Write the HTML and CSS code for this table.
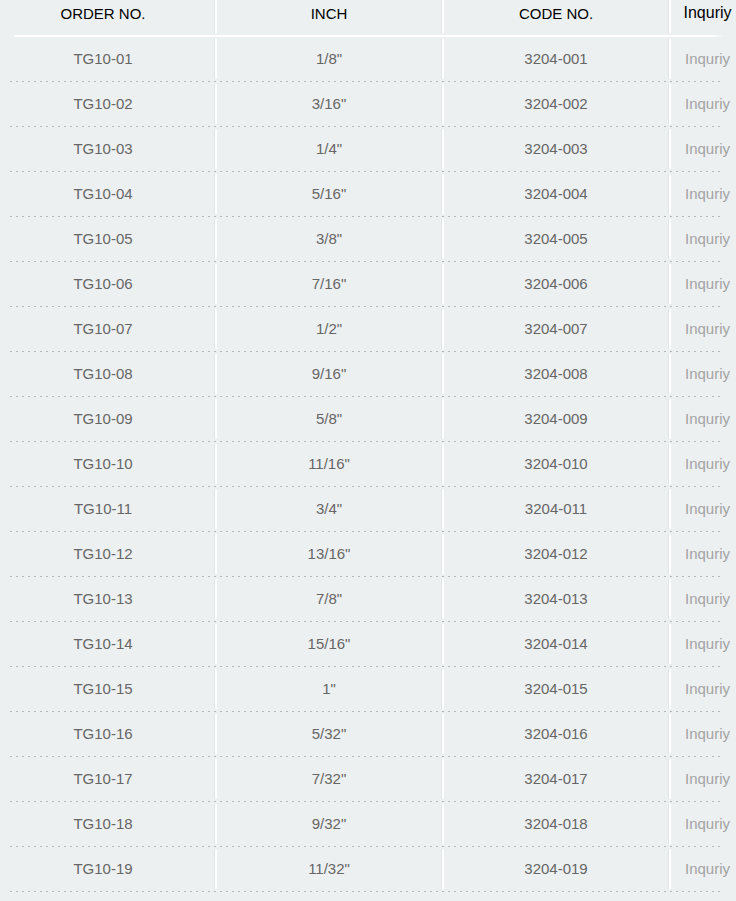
FILE: index.html
```html
<!DOCTYPE html>
<html>
<head>
<meta charset="utf-8">
<link rel="stylesheet" href="styles.css">
</head>
<body>
<div class="table">
  <div class="row head">
    <div class="cell first">ORDER NO.</div><span class="sep"></span>
    <div class="cell">INCH</div><span class="sep"></span>
    <div class="cell">CODE NO.</div><span class="sep"></span>
    <div class="cell last">Inquriy</div>
  </div>
  <div class="head-line"></div>
  <div id="body"></div>
</div>
<script src="script.js"></script>
</body>
</html>
```

FILE: script.js
```js
const inch = ['1/8"','3/16"','1/4"','5/16"','3/8"','7/16"','1/2"','9/16"','5/8"','11/16"','3/4"','13/16"','7/8"','15/16"','1"','5/32"','7/32"','9/32"','11/32"'];
const body = document.getElementById('body');
let html = '';
inch.forEach((v, i) => {
  const n = String(i + 1).padStart(2, '0');
  html += '<div class="row item">' +
    '<div class="cell first">TG10-' + n + '</div><span class="sep"></span>' +
    '<div class="cell">' + v + '</div><span class="sep"></span>' +
    '<div class="cell">3204-0' + n + '</div><span class="sep"></span>' +
    '<div class="cell last">Inquriy</div></div>';
});
body.innerHTML = html;
```

FILE: styles.css
```css
html, body {
  margin: 0;
  padding: 0;
  background: #edf0f1;
  overflow: hidden;
}
body {
  font-family: "Liberation Sans", Arial, sans-serif;
  font-size: 15px;
  width: 736px;
}
.table {
  width: 744px;
}
.row {
  display: grid;
  grid-template-columns: 214px 3px 224px 3px 224px 3px 73px;
}
.cell {
  display: flex;
  align-items: center;
  justify-content: center;
  white-space: nowrap;
}
.cell.first {
  padding-right: 8px;
}
.sep {
  background: linear-gradient(to right, #e2e5e6 0 1px, #ffffff 1px 3px);
}
.head {
  height: 35px;
  color: #000;
}
.head .cell {
  padding-bottom: 9px;
}
.head .sep {
  margin-bottom: 2px;
}
.head .cell.last {
  font-size: 16px;
}
.head-line {
  height: 2px;
  background: linear-gradient(to right, transparent 0 14px, #ffffff 14px 712px, rgba(255,255,255,0) 724px);
}
.item {
  height: 44px;
  padding-bottom: 1px;
  color: #666;
  background-image: repeating-linear-gradient(to right, #b4b7b9 0 2px, transparent 2px 6px);
  background-size: 712px 1px;
  background-position: 10px 100%;
  background-repeat: no-repeat;
}
.item .cell {
  padding-bottom: 2px;
}
.item .sep {
  margin: 2px 0 2px;
}
.item .cell.last {
  color: #a3a3a3;
}
```
